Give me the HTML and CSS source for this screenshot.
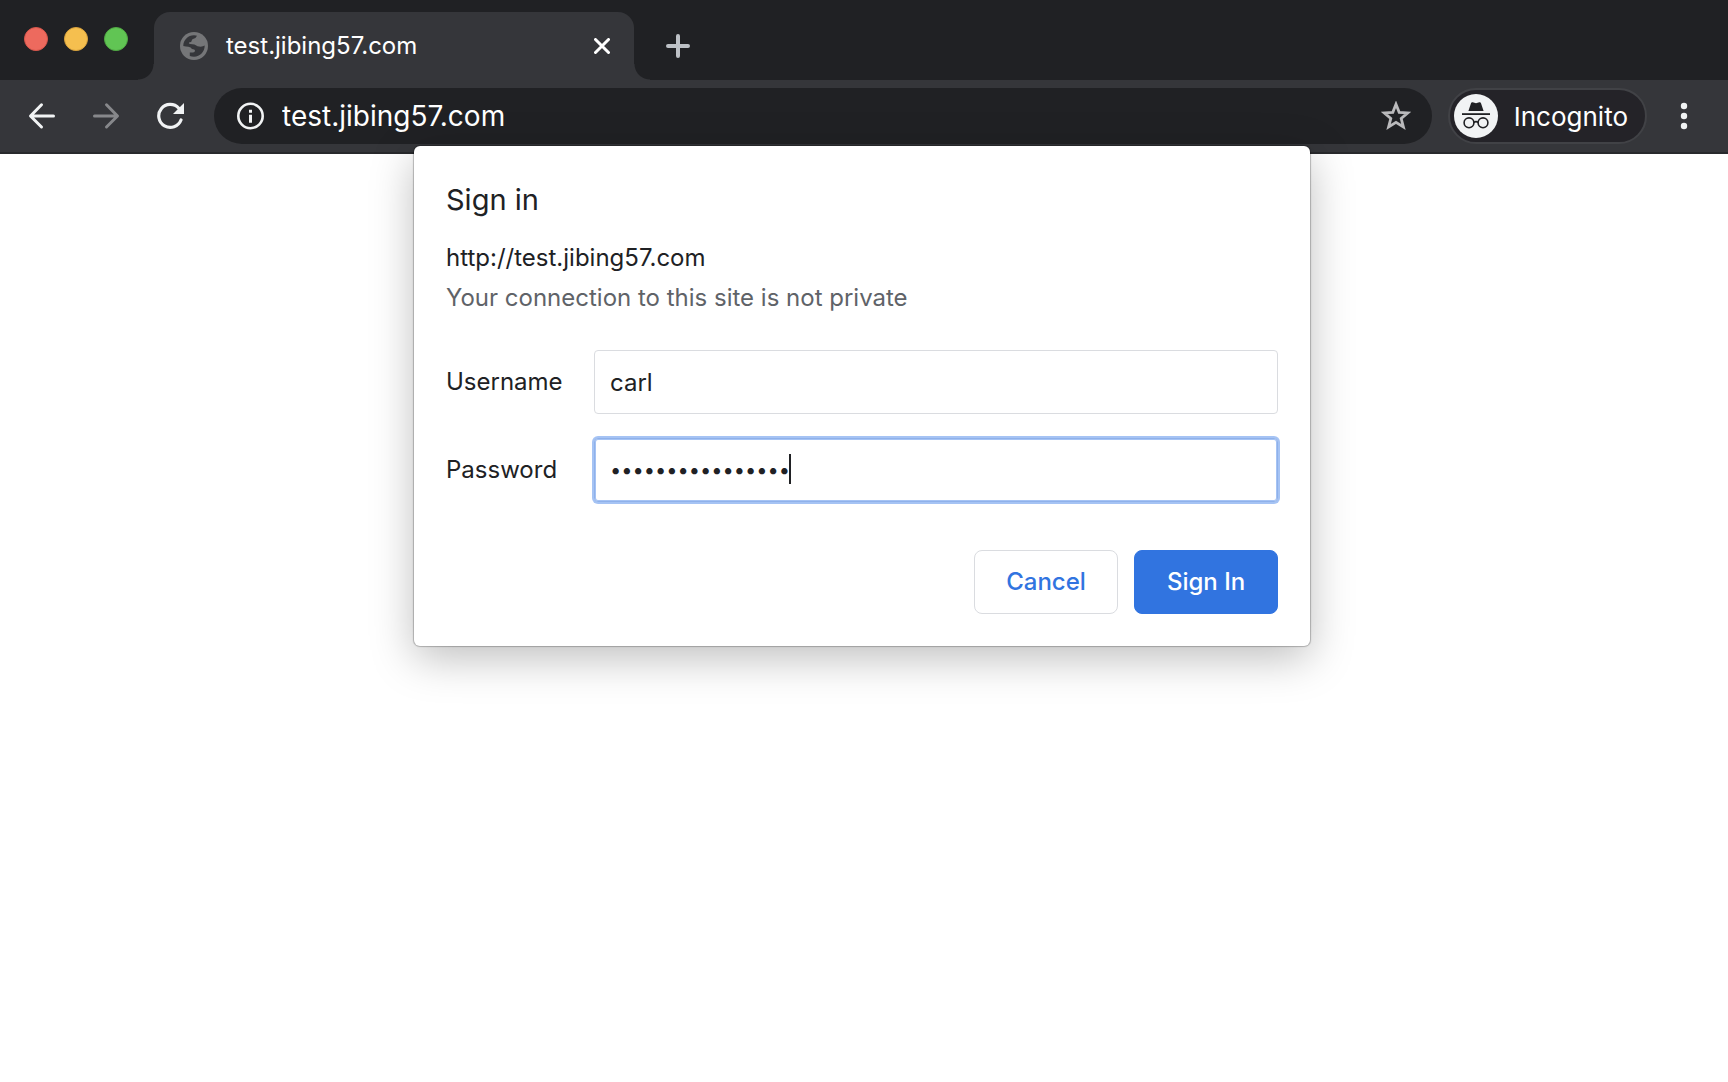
FILE: index.html
```html
<!DOCTYPE html>
<html lang="en">
<head>
<meta charset="utf-8">
<meta name="viewport" content="width=device-width, initial-scale=1">
<title>test.jibing57.com</title>
<link rel="stylesheet" href="styles.css">
</head>
<body>
<header class="browser">
  <div class="tab-strip">
    <div class="window-controls">
      <button class="light light-close" type="button" aria-label="Close window"></button>
      <button class="light light-minimize" type="button" aria-label="Minimize window"></button>
      <button class="light light-zoom" type="button" aria-label="Zoom window"></button>
    </div>
    <div class="tab">
      <svg class="favicon" viewBox="0 0 28 28" aria-hidden="true">
        <circle cx="14" cy="14" r="14" fill="#757678"/>
        <path d="M3.3 14C3.3 8 8 3.2 14 3.2Q16 3.2 17 3.8 15.8 6.8 13 7 11.6 7.2 11.6 9.2 11.4 10.2 9 10.4 8.2 11.6 10.2 12L14.4 12.4Q17.6 14.8 20.6 14.8 23 14.6 24.7 13.6C24.7 20 20 24.8 14 24.8Q11.6 24.8 9.8 24V20.6H13Q15 20.4 15 18.6 15 17.2 12 17 11 15.4 8.4 14.8 6 14.4 3.3 14Z" fill="#35363a"/>
      </svg>
      <span class="tab-title">test.jibing57.com</span>
      <button class="icon-button tab-close" type="button" aria-label="Close tab">
        <svg viewBox="0 0 16 16"><path d="M1.5 1.5 14.5 14.5M14.5 1.5 1.5 14.5" fill="none" stroke="#fff" stroke-width="3" stroke-linecap="round"/></svg>
      </button>
    </div>
    <button class="icon-button new-tab" type="button" aria-label="New tab">
      <svg viewBox="0 0 24 24"><path d="M12 2V22M2 12H22" fill="none" stroke="#bdc1c6" stroke-width="4" stroke-linecap="round"/></svg>
    </button>
  </div>
  <nav class="toolbar" aria-label="Browser toolbar">
    <div class="nav-buttons">
      <button class="icon-button nav-button" type="button" aria-label="Back">
        <svg viewBox="0 0 28 28"><path d="M25.5 14H3M13.5 2.8 2.5 14 13.5 25" fill="none" stroke="#f1f3f4" stroke-width="3" stroke-linecap="round" stroke-linejoin="round"/></svg>
      </button>
      <button class="icon-button nav-button" type="button" aria-label="Forward" disabled>
        <svg viewBox="0 0 28 28"><path d="M2.5 14H25M14.5 2.8 25.5 14 14.5 25" fill="none" stroke="#87888b" stroke-width="3" stroke-linecap="round" stroke-linejoin="round"/></svg>
      </button>
      <button class="icon-button nav-button" type="button" aria-label="Reload">
        <svg viewBox="0 0 28 28"><path d="M22.8 6.2A11.5 11.5 0 1 0 25 18" fill="none" stroke="#f1f3f4" stroke-width="3.2" stroke-linecap="round"/><path d="M28 1V12H17Z" fill="#f1f3f4"/></svg>
      </button>
    </div>
    <div class="omnibox">
      <svg class="info-icon" viewBox="0 0 28 28" aria-hidden="true"><circle cx="14.5" cy="14" r="12.2" fill="none" stroke="#f1f3f4" stroke-width="2.6"/><path d="M13 7.7h3v3h-3zM13 12.7h3v8h-3z" fill="#f1f3f4"/></svg>
      <input class="address" type="text" aria-label="Address" value="test.jibing57.com">
      <button class="icon-button star-button" type="button" aria-label="Bookmark this page">
        <svg viewBox="0 0 30 30"><path d="M15 3.2 18.2 11.3 26.8 11.9 20.2 17.5 22.4 26 15 21.3 7.6 26 9.8 17.5 3.2 11.9 11.8 11.3Z" fill="none" stroke="#bababc" stroke-width="2.8"/></svg>
      </button>
    </div>
    <button class="profile" type="button">
      <svg class="avatar" viewBox="0 0 44 44" aria-hidden="true">
        <circle cx="22" cy="22" r="22" fill="#f1f3f4"/>
        <path d="M14.4 17 17 9.2Q17.4 8 18.7 8.3L22 9.2 25.3 8.3Q26.6 8 27 9.2L29.6 17Z" fill="#202124"/>
        <path d="M8 19.2H36V21H8Z" fill="#202124"/>
        <circle cx="15" cy="28.8" r="4.9" fill="none" stroke="#202124" stroke-width="1.6"/>
        <circle cx="29" cy="28.8" r="4.9" fill="none" stroke="#202124" stroke-width="1.6"/>
        <path d="M19.8 28.4Q22 26.8 24.2 28.4" fill="none" stroke="#202124" stroke-width="1.8"/>
      </svg>
      <span class="profile-name">Incognito</span>
    </button>
    <button class="icon-button menu-button" type="button" aria-label="Menu">
      <svg viewBox="0 0 8 28"><circle cx="4" cy="4" r="3.2" fill="#f1f3f4"/><circle cx="4" cy="14" r="3.2" fill="#f1f3f4"/><circle cx="4" cy="24" r="3.2" fill="#f1f3f4"/></svg>
    </button>
  </nav>
</header>
<main class="page">
  <form class="dialog" role="dialog" aria-labelledby="dialog-title">
    <h1 class="dialog-title" id="dialog-title">Sign in</h1>
    <p class="origin">http://test.jibing57.com</p>
    <p class="warning">Your connection to this site is not private</p>
    <div class="fields">
      <label for="username">Username</label>
      <input class="field" id="username" type="text" value="carl" autocomplete="off">
      <label for="password">Password</label>
      <div class="password-box">
        <input class="field field-focused" id="password" type="password" value="abcdefghijklmnop" autocomplete="off">
        <span class="caret"></span>
      </div>
    </div>
    <div class="actions">
      <button class="button" type="button">Cancel</button>
      <button class="button button-primary" type="button">Sign In</button>
    </div>
  </form>
</main>
</body>
</html>
```
FILE: styles.css
```css
* {
  box-sizing: border-box;
}

body {
  margin: 0;
  min-height: 100vh;
  display: flex;
  flex-direction: column;
  background: #fff;
  color: #202124;
  font-family: Inter, "Liberation Sans", sans-serif;
  font-size: 24px;
  line-height: 32px;
}

button,
input {
  font: inherit;
  color: inherit;
}

.icon-button {
  display: flex;
  flex: none;
  padding: 0;
  border: 0;
  background: none;
}

.icon-button svg {
  display: block;
  width: 100%;
}

/* Tab strip */
.tab-strip {
  display: flex;
  height: 80px;
  padding: 12px 20px 0 24px;
  background: #202124;
}

.window-controls {
  display: flex;
  gap: 16px;
  padding-top: 15px;
  margin-right: 26px;
}

.light {
  width: 24px;
  height: 24px;
  padding: 0;
  border: 1px solid;
  border-radius: 50%;
}

.light-close {
  background: #ed6a5e;
  border-color: #d8564b;
}

.light-minimize {
  background: #f5bf4f;
  border-color: #d9a23c;
}

.light-zoom {
  background: #61c554;
  border-color: #50a943;
}

.tab {
  position: relative;
  display: flex;
  align-items: center;
  width: 480px;
  height: 68px;
  padding: 0 24px 0 26px;
  border-radius: 16px 16px 0 0;
  background: #35363a;
  color: #fff;
}

.tab::before,
.tab::after {
  content: "";
  position: absolute;
  bottom: 0;
  width: 16px;
  height: 16px;
}

.tab::before {
  right: 100%;
  background: radial-gradient(circle at 0 0, #202124 15px, #35363a 16px);
}

.tab::after {
  left: 100%;
  background: radial-gradient(circle at 100% 0, #202124 15px, #35363a 16px);
}

.favicon {
  width: 28px;
  height: 28px;
  margin-right: 18px;
}

.tab-title {
  flex: 1;
}

.tab-close {
  width: 16px;
}

.new-tab {
  align-self: center;
  width: 24px;
  margin-left: 32px;
}

/* Toolbar */
.toolbar {
  display: flex;
  align-items: center;
  height: 74px;
  padding: 6px 40px 6px 28px;
  border-bottom: 2px solid #28292c;
  background: #35363a;
  color: #fff;
}

.nav-buttons {
  display: flex;
  gap: 36px;
  margin-right: 30px;
}

.nav-button {
  width: 28px;
}

.omnibox {
  display: flex;
  flex: 1;
  align-items: center;
  height: 56px;
  padding: 0 21px 0 22px;
  border-radius: 28px;
  background: #202124;
}

.info-icon {
  flex: none;
  width: 28px;
  height: 28px;
  margin-right: 18px;
}

.address {
  flex: 1;
  min-width: 0;
  padding: 0;
  border: 0;
  outline: 0;
  background: none;
  font-size: 28px;
}

.star-button {
  width: 30px;
}

.profile {
  display: flex;
  align-items: center;
  gap: 16px;
  height: 56px;
  margin-left: 16px;
  padding: 0 17px 0 4px;
  border: 2px solid #414246;
  border-radius: 28px;
  background: #242328;
  font-size: 26px;
}

.profile-name {
  padding-top: 2px;
}

.avatar {
  width: 44px;
  height: 44px;
}

.menu-button {
  width: 8px;
  margin-left: 33px;
}

/* Page and sign-in dialog */
.page {
  position: relative;
  flex: 1;
}

.dialog {
  position: absolute;
  top: -8px;
  left: 50%;
  width: 896px;
  margin-left: -450px;
  padding: 32px;
  border-radius: 6px;
  background: #fff;
  box-shadow: 0 0 1px 1px rgba(0, 0, 0, 0.24), 0 12px 44px rgba(0, 0, 0, 0.26);
}

.dialog-title {
  margin: 0 0 16px;
  font-size: 29px;
  font-weight: 400;
  line-height: 44px;
}

.origin,
.warning {
  margin: 0;
  line-height: 40px;
}

.warning {
  color: #5f6368;
}

.fields {
  display: grid;
  grid-template-columns: 116px 1fr;
  align-items: center;
  gap: 24px 32px;
  margin-top: 32px;
}

.field {
  display: block;
  width: 100%;
  height: 64px;
  padding: 0 15px;
  border: 1px solid #dadce0;
  border-radius: 4px;
  outline: 0;
  background: #fff;
}

.field-focused {
  border-color: #8fb1ea;
  box-shadow: inset 0 0 0 1px #a5c3f4, 0 0 0 2px #a5c3f4;
  font-size: 20px;
}

.password-box {
  position: relative;
}

.caret {
  position: absolute;
  top: 16px;
  left: 195px;
  width: 2px;
  height: 30px;
  background: #202124;
}

.actions {
  display: flex;
  justify-content: flex-end;
  gap: 16px;
  margin-top: 48px;
}

.button {
  width: 144px;
  height: 64px;
  padding: 0;
  border: 1px solid #dadce0;
  border-radius: 8px;
  background: #fff;
  color: #3174e0;
  font-weight: 500;
}

.button-primary {
  border-color: #3174e0;
  background: #3174e0;
  color: #fff;
}
```
